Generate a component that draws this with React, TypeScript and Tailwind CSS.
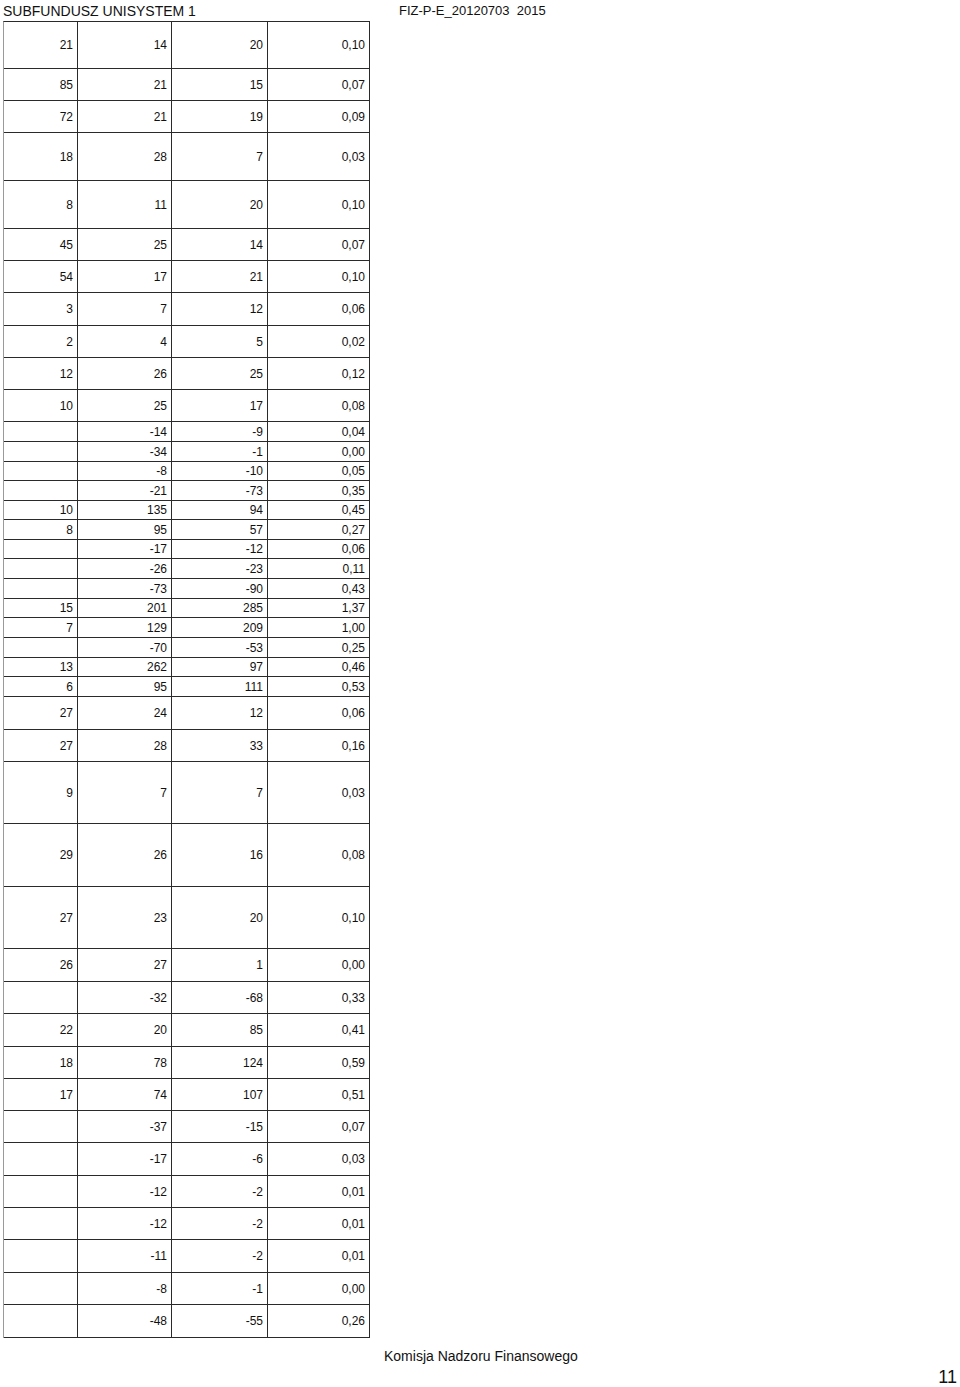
type Row = [string, string, string, string, number];

const rows: Row[] = [
  ["21", "14", "20", "0,10", 47],
  ["85", "21", "15", "0,07", 32],
  ["72", "21", "19", "0,09", 32],
  ["18", "28", "7", "0,03", 48],
  ["8", "11", "20", "0,10", 48],
  ["45", "25", "14", "0,07", 32],
  ["54", "17", "21", "0,10", 32],
  ["3", "7", "12", "0,06", 33],
  ["2", "4", "5", "0,02", 32],
  ["12", "26", "25", "0,12", 32],
  ["10", "25", "17", "0,08", 32],
  ["", "-14", "-9", "0,04", 20],
  ["", "-34", "-1", "0,00", 20],
  ["", "-8", "-10", "0,05", 19],
  ["", "-21", "-73", "0,35", 20],
  ["10", "135", "94", "0,45", 19],
  ["8", "95", "57", "0,27", 20],
  ["", "-17", "-12", "0,06", 19],
  ["", "-26", "-23", "0,11", 20],
  ["", "-73", "-90", "0,43", 20],
  ["15", "201", "285", "1,37", 19],
  ["7", "129", "209", "1,00", 20],
  ["", "-70", "-53", "0,25", 20],
  ["13", "262", "97", "0,46", 19],
  ["6", "95", "111", "0,53", 20],
  ["27", "24", "12", "0,06", 33],
  ["27", "28", "33", "0,16", 32],
  ["9", "7", "7", "0,03", 62],
  ["29", "26", "16", "0,08", 63],
  ["27", "23", "20", "0,10", 62],
  ["26", "27", "1", "0,00", 33],
  ["", "-32", "-68", "0,33", 32],
  ["22", "20", "85", "0,41", 33],
  ["18", "78", "124", "0,59", 32],
  ["17", "74", "107", "0,51", 32],
  ["", "-37", "-15", "0,07", 32],
  ["", "-17", "-6", "0,03", 33],
  ["", "-12", "-2", "0,01", 32],
  ["", "-12", "-2", "0,01", 32],
  ["", "-11", "-2", "0,01", 33],
  ["", "-8", "-1", "0,00", 32],
  ["", "-48", "-55", "0,26", 33],
];

const cell =
  "flex items-center justify-end pr-[4px] border-r-[1.5px] border-[#2a2a2a]";

export default function App() {
  return (
    <div
      className="w-[960px] h-[1387px] bg-white text-[#111] overflow-hidden"
      style={{ fontFamily: '"Liberation Sans", Arial, sans-serif' }}
    >
      {/* nagłówek strony */}
      <div className="flex h-[21px] items-center leading-none">
        <span className="w-[399px] pl-[3px] text-[14px]">SUBFUNDUSZ UNISYSTEM 1</span>
        <span className="whitespace-pre text-[13px]">FIZ-P-E_20120703  2015</span>
      </div>

      <div className="ml-[3px] w-[367px] border-t-[1.5px] border-l border-[#2a2a2a] border-l-[#9a9a9a] text-[12px] leading-none">
        {rows.map(([a, b, c, d, h], i) => (
          <div
            key={i}
            className="grid grid-cols-[74px_94px_96px_102px] border-b-[1.5px] border-[#2a2a2a] box-border"
            style={{ height: h }}
          >
            <div className={cell}>{a}</div>
            <div className={cell}>{b}</div>
            <div className={cell}>{c}</div>
            <div className={cell}>{d}</div>
          </div>
        ))}
      </div>

      {/* stopka */}
      <div className="pl-[384px] pt-[11px] text-[14px] leading-none">
        Komisja Nadzoru Finansowego
      </div>
      <div className="flex justify-end pr-[3px] pt-[5px] text-[18px] leading-none">
        11
      </div>
    </div>
  );
}
